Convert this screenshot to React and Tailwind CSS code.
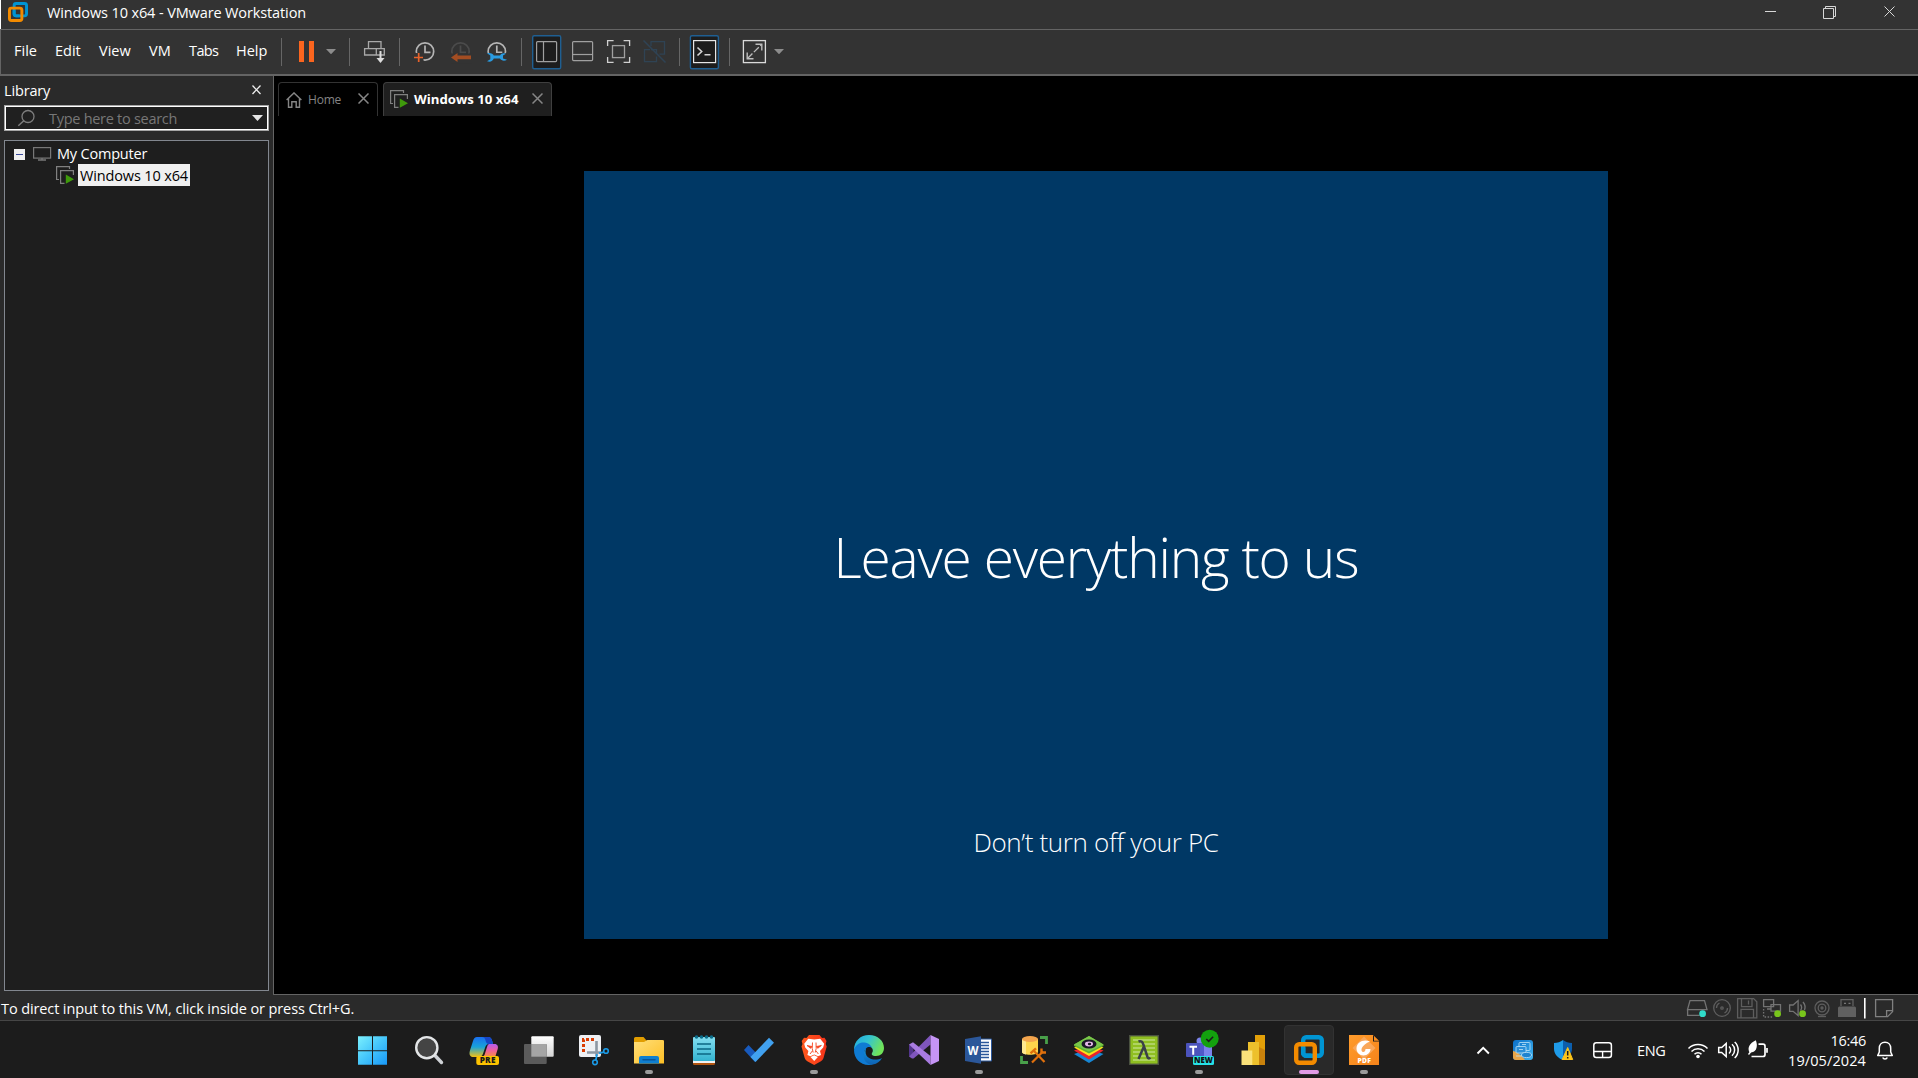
import React from "react";

/* Drawing area whose user units are window pixels. */
function Px({ x, y, w, h, className = "", children }) {
  return (
    <svg width={w} height={h} viewBox={`${x} ${y} ${w} ${h}`} fill="none" className={`block shrink-0 ${className}`}>
      {children}
    </svg>
  );
}

function VmLogo({ size }) {
  return (
    <svg width={size} height={size} viewBox="0 0 30 30" fill="none" className="block shrink-0">
      <rect x="9.2" y="2.2" width="18.6" height="18.6" rx="3" stroke="#0095d3" strokeWidth="4.4" />
      <rect x="2.2" y="9.2" width="18.6" height="18.6" rx="3" stroke="#f38b00" strokeWidth="4.4" />
      <path d="M9.2 12.5V18a3 3 0 0 0 3 2.8h5" stroke="#0095d3" strokeWidth="4.4" />
    </svg>
  );
}

function TitleBar() {
  return (
    <header className="flex h-[30px] shrink-0 border-b border-[#646464] bg-[#333333]">
      <div className="w-px bg-white" />
      <div className="pt-[2px] pl-[7px]"><VmLogo size={20} /></div>
      <h1 className="pt-[3px] pl-[19px] text-[14.5px] leading-5 tracking-[-0.12px] text-white">
        Windows 10 x64 - VMware Workstation
      </h1>
      <Px x={1758} y={0} w={160} h={29} className="ml-auto">
        <g stroke="#d8d8d8">
          <path d="M1765 11.5h11" />
          <path d="M1823.5 8.5h10v10h-10zM1825.5 8.5v-2h10v10h-2" />
          <path d="M1884.5 6.5l10 10M1894.5 6.5l-10 10" />
        </g>
      </Px>
    </header>
  );
}

function Clock({ cx, stroke }) {
  return (
    <g stroke={stroke}>
      <circle cx={cx} cy="51.5" r="8.7" strokeWidth="1.7" />
      <path d={`M${cx} 45.5v6.8h5.5`} strokeWidth="1.7" />
    </g>
  );
}

function Toolbar() {
  return (
    <nav className="flex h-[46px] shrink-0 border-b-2 border-[#646464] bg-[#333333] text-[14.5px] leading-5 text-white">
      <div className="w-px bg-[#646464]" />
      <div className="flex w-[279px] pt-[11px] pl-[13px]">
        <span className="w-[41px]">File</span>
        <span className="w-[44px]">Edit</span>
        <span className="w-[50px]">View</span>
        <span className="w-[40px]">VM</span>
        <span className="w-[47px] tracking-[-0.6px]">Tabs</span>
        <span>Help</span>
      </div>
      <Px x={280} y={30} w={520} h={44}>
        <g stroke="#666">
          <path d="M281.5 38v28M349.5 38v28M399.5 38v28M521.5 38v28M679.5 38v28M729.5 38v28" />
        </g>
        <path d="M299 41h5v21h-5zM309 41h5v21h-5z" fill="#fb651e" />
        <path d="M326 49h10l-5 5.3zM774 49h10l-5 5.3z" fill="#8c8c8c" />
        <g stroke="#a9a9a9" strokeWidth="1.3">
          <path d="M368.5 41.7h12.5v7h-12.5zM364.6 48.7h11.7v6.3h-11.7zM376.3 48.7h8v6.3h-8z" />
          <path d="M380.5 51v10" stroke="#ddd" strokeWidth="2" />
          <path d="M376.5 58h8l-4 5z" fill="#ddd" stroke="none" />
        </g>
        <Clock cx={425} stroke="#b5b5b5" />
        <path d="M413 53h6.5v3h4v7h-10.500z" fill="#333" />
        <path d="M418.700 53v9M414 57.500h9" stroke="#e8622a" strokeWidth="1.7" />
        <Clock cx={460.5} stroke="#4b4b4b" />
        <path d="M451 53.5h21v10h-21z" fill="#333" />
        <path d="M451 57.500l6.500-4.500v2.600H471v3.600h-13.500v2.800z" fill="#a34d22" />
        <Clock cx={496.8} stroke="#b5b5b5" />
        <path d="M486 53h22v10h-22z" fill="#333" />
        <path d="M487 53.200c3.300-.8 6 .3 6.800 2.400H500c1-2.300 3.600-2.900 6-1.900l-3 1.800v3l4 1.300c-2.500 1.500-5.800 1-7-1.200h-6.200c-1 2.600-3.500 3.800-6.800 2.700l3.300-2.100v-3.700z" fill="#2a9be0" />
        <rect x="532.7" y="35.7" width="28" height="33" rx="1.5" fill="#1d1d1d" stroke="#1f5f92" strokeWidth="1.4" />
        <g stroke="#a0a0a0" strokeWidth="1.2">
          <rect x="536.6" y="41.6" width="20" height="20" rx="1" />
          <path d="M543.5 41.6v20" />
          <rect x="572.6" y="41.6" width="20" height="19" rx="1" />
          <path d="M572.6 54.5h20" />
        </g>
        <g stroke="#d0d0d0" strokeWidth="1.3">
          <path d="M607.6 46v-5.4h6M623.6 40.6h6v5.4M629.6 57v5.4h-6M613.6 62.4h-6v-5.4" />
          <rect x="612.5" y="45.6" width="12" height="12" stroke="#a0a0a0" />
        </g>
        <g stroke="#2f4354" strokeWidth="1.3">
          <path d="M651 46v-4.400h13.500v12.500h-5M650 49.600h-5.500v12h12v-5M651 49.600h5.500v4.500" />
          <path d="M643.500 40.500l22 22" strokeWidth="1.6" />
        </g>
        <rect x="690.4" y="35.7" width="28" height="33" rx="1.5" fill="#1d1d1d" stroke="#1f5f92" strokeWidth="1.4" />
        <rect x="693.6" y="40.6" width="22" height="22" stroke="#e6e6e6" strokeWidth="1.2" />
        <path d="M697.5 47.5l4.2 4-4.2 4M704.500 54.800h6" stroke="#d5d5d5" strokeWidth="1.6" />
        <rect x="743.4" y="40.6" width="22" height="22" stroke="#dadada" strokeWidth="1.3" />
        <path d="M747.5 58.500L761.500 44.500" stroke="#bdbdbd" strokeWidth="1.3" strokeDasharray="7 2" />
        <path d="M755.5 44.200h6.300v6.300M747.200 52.500v6.300h6.300" stroke="#bdbdbd" strokeWidth="1.4" />
      </Px>
    </nav>
  );
}

function VmRunning() {
  return (
    <svg width="18" height="18" viewBox="0 0 18 18" fill="none" className="block shrink-0">
      <path d="M3 13.5H.6V.6H13.500V3" stroke="#808080" strokeWidth="1.2" />
      <path d="M8.5 17.4H4.600V4.600H17.400V9" stroke="#808080" strokeWidth="1.2" />
      <path d="M9.8 8.6L18 13.2 9.800 17.800z" fill="#3f9a0c" />
    </svg>
  );
}

function Library() {
  return (
    <aside className="flex w-[273px] shrink-0 flex-col bg-[#2a2a2a] pr-[4px] pb-[4px] pl-[4px] text-[14.5px] leading-5 text-white">
      <div className="flex h-[29px] pt-[5px]">
        <span className="tracking-[-0.15px]">Library</span>
        <Px x={249} y={81} w={20} h={20} className="ml-auto">
          <path d="M252.5 85.500l8 8.500M260.500 85.500l-8 8.500" stroke="#ededed" strokeWidth="1.3" />
        </Px>
      </div>
      <div className="flex h-[26px] shrink-0 border border-[#a5a5a5] bg-[#202020] text-[#777]">
        <div className="flex grow border border-white">
          <Px x={6} y={107} w={42} h={22}>
            <circle cx="28" cy="116.5" r="6" stroke="#7d7d7d" strokeWidth="1.3" />
            <path d="M23.8 120.800l-5.500 5" stroke="#7d7d7d" strokeWidth="1.5" />
          </Px>
          <span className="pt-[2px] pl-[1px] tracking-[-0.28px]">Type here to search</span>
          <Px x={247} y={107} w={20} h={22} className="ml-auto">
            <path d="M252 115h11l-5.500 6z" fill="#e5e5e5" />
          </Px>
        </div>
      </div>
      <div className="mt-[9px] grow border border-[#82878f] bg-[#1e1e1e] pt-[2px]">
        <div className="flex h-[21px]">
          <Px x={5} y={143} w={52} h={20}>
            <rect x="14" y="149" width="11" height="11" fill="#f0f0f0" />
            <path d="M16 154.500h7" stroke="#3a4a9c" />
            <rect x="33.6" y="147.600" width="17" height="10.500" stroke="#787878" strokeWidth="1.2" />
            <path d="M38 160h8M42 158v2" stroke="#787878" strokeWidth="1.3" />
          </Px>
          <span className="pt-px tracking-[-0.2px]">My Computer</span>
        </div>
        <div className="flex h-[22px] pl-[51px]">
          <div className="pt-[2px]"><VmRunning /></div>
          <span className="ml-[4px] h-[22px] w-[112px] bg-[#f0f0f0] pt-[2px] pl-[2px] tracking-[-0.14px] whitespace-nowrap text-black">
            Windows 10 x64
          </span>
        </div>
      </div>
    </aside>
  );
}

function TabClose() {
  return (
    <svg width="11" height="11" viewBox="0 0 11 11" className="mt-[10px] block shrink-0">
      <path d="M.5 .5l10 10M10.500 .5l-10 10" stroke="#868686" strokeWidth="1.5" />
    </svg>
  );
}

function Console() {
  return (
    <main className="flex grow flex-col border-b border-l border-[#646464] bg-black">
      <div className="flex gap-[5px] pt-[6px] pl-[4px]">
        <div className="flex h-[34px] w-[100px] rounded-t-[4px] border border-b-0 border-[#333]">
          <svg width="16" height="16" viewBox="0 0 16 16" fill="none" className="mt-[9px] ml-[7px] block">
            <path d="M.6 8L8 .9 15.400 8M2.500 6.500v8.700h3.300V9.800h4.400v5.400h3.300V6.500" stroke="#858585" strokeWidth="1.4" />
          </svg>
          <span className="w-[49px] pt-[7px] pl-[6px] text-[12px] leading-[20px] tracking-[-0.2px] text-[#858585]">Home</span>
          <div className="ml-[7px]"><TabClose /></div>
        </div>
        <div className="flex h-[34px] w-[169px] rounded-t-[4px] border border-b-0 border-[#3f3f3f] bg-[#1f1f1f]">
          <div className="pt-[7px] pl-[6px]"><VmRunning /></div>
          <span className="w-[124px] pt-[6px] pl-[6px] text-[13.2px] leading-[20px] font-bold whitespace-nowrap text-white">
            Windows 10 x64
          </span>
          <TabClose />
        </div>
      </div>
      <section className="mt-[55px] ml-[310px] flex h-[768px] w-[1024px] flex-col items-center bg-[#003865] text-white">
        <p className="mt-[346px] text-[55px] leading-[80px] font-light tracking-[-1.2px]">Leave everything to us</p>
        <p className="mt-[225px] text-[26px] leading-[40px] font-light tracking-[-0.35px]">Don’t turn off your PC</p>
      </section>
    </main>
  );
}

function StatusBar() {
  return (
    <div className="flex h-[26px] shrink-0 border-b border-[#464646] bg-[#2a2a2a]">
      <p className="pt-[4px] pl-[1px] text-[14.5px] leading-5 tracking-[-0.11px] text-white">
        To direct input to this VM, click inside or press Ctrl+G.
      </p>
      <Px x={1680} y={995} w={238} h={25} className="ml-auto">
        <g stroke="#737373" strokeWidth="1.3">
          <path d="M1690 1000.600h14.500l2.500 9h-19.500zM1687.600 1009.600v5.700h12" />
          <g stroke="#5e5e5e">
            <circle cx="1722" cy="1008" r="8.3" />
            <circle cx="1722" cy="1008" r="1.2" />
            <path d="M1716.500 1008a5.500 5.500 0 0 1 3-5M1727.500 1008a5.500 5.500 0 0 1-3 5" />
            <path d="M1737.600 998.600h16l3.200 3.200v16h-19.200zM1741.500 998.600v8h10.500v-8M1748.500 1000.500v4M1741 1017.800v-8.500h12.500v8.500" />
          </g>
          <path d="M1763.600 999.600h10v7h-10zM1771 1004.600h9.500v6.500h-9.500zM1767 1009h3.500" fill="#2a2a2a" />
          <path d="M1763.600 1009v8h10" strokeDasharray="1.5 1.5" />
          <path d="M1789.600 1005h3.500l5-4.400v15l-5-4.300h-3.500zM1800.500 1004.500a5 5 0 0 1 0 6M1803 1002a8 8 0 0 1 1.500 8" />
          <g stroke="#5e5e5e">
            <circle cx="1822" cy="1008" r="7" />
            <circle cx="1822" cy="1008" r="3.8" />
            <circle cx="1822" cy="1008" r="1" />
            <path d="M1818 1016.500h8" />
          </g>
          <path d="M1841 1006v-6.400h12v6.400" stroke="#606060" />
          <path d="M1844 1003.300h2M1848.500 1003.300h2" stroke="#777" />
          <path d="M1838 1008a1.500 1.500 0 0 1 1.500-1.500h15a1.500 1.500 0 0 1 1.500 1.500v9h-18z" fill="#606060" stroke="none" />
          <path d="M1875.600 999.600h17v12l-5 5h-12zM1892.600 1010.600h-6v6" stroke="#808080" />
        </g>
        <path d="M1864.800 998v20.500" stroke="#fff" strokeWidth="1.6" />
        <circle cx="1702.6" cy="1013.7" r="3.4" fill="#30dbc9" />
        <circle cx="1777.6" cy="1013.7" r="3.4" fill="#79c51c" />
        <circle cx="1802.6" cy="1013.7" r="3.4" fill="#79c51c" />
      </Px>
    </div>
  );
}

function Grad({ id, a, b, c, x2 = 1, y2 = 1 }) {
  return (
    <linearGradient id={id} x1="0" y1="0" x2={x2} y2={y2}>
      <stop offset="0" stopColor={a} />
      {c && <stop offset=".5" stopColor={c} />}
      <stop offset="1" stopColor={b} />
    </linearGradient>
  );
}

function Defs() {
  return (
    <defs>
      <linearGradient id="win" gradientUnits="userSpaceOnUse" x1="0" y1="1" x2="29" y2="30">
        <stop offset="0" stopColor="#7df1fd" /><stop offset=".5" stopColor="#45c6fb" /><stop offset="1" stopColor="#1898f8" />
      </linearGradient>
      <Grad id="copA" a="#1a6ff0" c="#19a3d8" b="#f2c215" x2={0} />
      <Grad id="copB" a="#b45cf0" c="#f0609a" b="#f7913d" x2={0} />
      <Grad id="tv" a="#ffffff" b="#d5d5d5" x2={0} />
      <Grad id="fold" a="#ffdf7a" b="#fdbf25" />
      <Grad id="note" a="#83def0" b="#33b3d0" x2={0} />
      <Grad id="brv" a="#ff5a1e" b="#f5331a" y2={0} />
      <Grad id="edgeA" a="#1fa9e3" c="#35c4cf" b="#6fe35a" y2={0.4} />
      <Grad id="edgeB" a="#1192dd" b="#0e62b3" x2={0} />
      <Grad id="foxit" a="#ff9c2c" b="#f5831a" />
      <Grad id="tray" a="#0b6fc8" b="#41b4ef" />
    </defs>
  );
}

const ICONS = [
  {
    art: <g transform="translate(-1.5 0)" fill="url(#win)"><path d="M.5 1.300h14v14h-14zM15.500 1.300h14v14h-14zM.5 16.300h14v13.500h-14zM15.500 16.300h14v13.500h-14z" /></g>,
  },
  {
    art: <g><path d="M21 20.500l6.500 7" stroke="#cfd2d6" strokeWidth="3.4" strokeLinecap="round" /><circle cx="12.8" cy="12.7" r="10.6" fill="#444" stroke="#e3e5e7" strokeWidth="2.4" /></g>,
  },
  {
    art: (
      <g>
        <path d="M8 2h11c2.600 0 3.600 1.500 4.200 4l.8 3h-4c-2 0-3 1-3.700 3l-2.400 7c-.8 2-2 3-4.500 3H4.500C1.500 22-.2 20 .8 16L4 6c.8-2.600 2-4 4-4z" fill="url(#copA)" />
        <path d="M13 2h6c2.600 0 3.600 1.500 4.200 4l.8 3h-4c-2.600 0-3-2-3.600-4C15.900 3 15 2 13 2z" fill="#1746c6" />
        <path d="M20 9h5.500c3 0 4 2.500 3.200 5l-2.500 8H13c1.800-.5 2.500-1.800 3-3.500l2-6.500c.5-1.700 1-2.500 2-3z" fill="url(#copB)" />
        <rect x="7.3" y="21" width="22.7" height="9" rx="2" fill="#fdc300" />
        <text x="18.7" y="28.4" textAnchor="middle" fontSize="8.2" fontWeight="800" fill="#1a1a1a" letterSpacing=".3">PRE</text>
      </g>
    ),
  },
  {
    art: <g><rect x="7.3" y="1.3" width="22.4" height="20.4" rx="1" fill="url(#tv)" /><rect x="0" y="9" width="22.7" height="20" rx="1" fill="#5b5b5b" /><path d="M7.3 9h15.400v12.700H7.300z" fill="#a5a5a5" /></g>,
  },
  {
    art: (
      <g>
        <rect width="22" height="22" rx="2" fill="#eef0f4" />
        <path d="M4.5 17V4.500H17" stroke="#da3b01" strokeWidth="3" strokeDasharray="3 2" />
        <path d="M17.5 6v15M8 17.500h14" stroke="#8c97a3" strokeWidth="2.6" />
        <circle cx="27" cy="16" r="2.3" stroke="#1a9be8" strokeWidth="1.6" />
        <circle cx="16" cy="27.3" r="2.3" stroke="#1a9be8" strokeWidth="1.6" />
        <path d="M25 17.200l-5 1M16.800 25.200l1.200-6" stroke="#1a9be8" strokeWidth="1.8" />
      </g>
    ),
  },
  {
    dot: true,
    art: (
      <g>
        <path d="M0 3.500A1.500 1.500 0 0 1 1.500 2h8l3 3.500H30V12H0z" fill="#e19d00" />
        <path d="M0 7h10l3.500-2H28.500A1.500 1.500 0 0 1 30 6.500V28.500H0z" fill="url(#fold)" />
        <path d="M5 28.500V23a2 2 0 0 1 2-2h16a2 2 0 0 1 2 2v5.500z" fill="#0f7fd0" />
        <path d="M9 24.700h12" stroke="#09559a" strokeWidth="1.5" strokeLinecap="round" />
      </g>
    ),
  },
  {
    art: (
      <g>
        <path d="M4 25h22v3.500a1.500 1.500 0 0 1-1.500 1.500h-19A1.500 1.500 0 0 1 4 28.500z" fill="#b1540f" />
        <path d="M4 22h22v6H4z" fill="#f1f1f1" />
        <rect x="4" y="2" width="22" height="24" rx="1" fill="url(#note)" />
        <path d="M8 9h14M8 14h14M8 19h14" stroke="#0b6784" strokeWidth="1.7" />
        <g fill="#0c6d8a"><circle cx="7.5" cy="2" r="1.8" /><circle cx="12.5" cy="2" r="1.8" /><circle cx="17.5" cy="2" r="1.8" /><circle cx="22.5" cy="2" r="1.8" /></g>
      </g>
    ),
  },
  {
    art: <g><path d="M0 15l4.500-5 11 11.500-4.500 5.500z" fill="#185abd" /><path d="M25 2.700l5 5L11.500 27 6.500 22z" fill="#41a1ef" /></g>,
  },
  {
    dot: true,
    art: (
      <g>
        <path d="M7.500 3L10 0h10.500L23 3l2.500-.3L27.500 6l-.8 3 1 2.500L24.500 23c-.5 1.700-1.500 2.500-3 3.500L15.200 30l-6.500-3.500c-1.500-1-2.500-1.800-3-3.500L2.500 11.500l1-2.500-.8-3L5 2.700z" fill="url(#brv)" />
        <path d="M15.200 4.500l6-.7 4 5-1 3.700L21 16l1 4-3 1.300-3.800-1.800-3.800 1.800L8.400 20l1-4-3.200-3.500-1-3.700 4-5z" fill="#fff" />
        <path d="M11.500 22l3.700-1.800 3.700 1.800-3.700 4z" fill="#fff" />
        <path d="M8 10.500l5 1-1.300 1.800zM22.400 10.500l-5 1 1.300 1.800z" fill="#f5411a" stroke="#f5411a" strokeWidth=".8" />
        <path d="M13.500 7.500l-.3 6 1 4M17 7.500l.2 6-1 4M11 19l2.300-3M19.400 19l-2.300-3" stroke="#f5411a" strokeWidth=".9" />
      </g>
    ),
  },
  {
    art: (
      <g>
        <path d="M0 15C0 6 6.500 0 15 0c9 0 15 6 15 13 0 5-3.500 8-8 8-4 0-5-1.500-4-3 1.300-2 1-4-.5-5.500C12 7.500 3 9 0 15z" fill="url(#edgeA)" />
        <path d="M0 15C1.500 9.500 6 7 10.500 7.500c4 .5 7 3 7.500 6-1.500-1.800-4-2-6 0-4 4-2.500 13 7 16C7.500 32 0 24 0 15z" fill="#0f7bd3" />
        <path d="M12 13.500C8.500 16 7.500 30 19 29.500c4-.8 7-3 9-6.500-6.500 3.500-19 1.500-16-9.500z" fill="url(#edgeB)" />
        <path d="M17.800 18c-1 1.500.5 3.500 4 3.700 2.500.1 4.500-.8 6.200.3-5 4.500-15.500 1.500-15.500-5.500 0-2 1.500-3.800 3.300-3.900 2.500.6 3.300 3.600 2 5.400z" fill="#1c1c1c" opacity=".55" />
      </g>
    ),
  },
  {
    art: (
      <g>
        <path d="M0 9.500L4.500 13v5L0 21.500z" fill="#52358c" />
        <path d="M0 21.500L21.500 0v9.500L4.500 23.600 3 23.500z" fill="#7f56bd" />
        <path d="M0 9.500L4 7.300 21.500 21v9z" fill="#a87be0" />
        <path d="M21.500 0L30 4v22l-8.500 4z" fill="#c594f5" />
      </g>
    ),
  },
  {
    dot: true,
    art: (
      <g>
        <path d="M14 4h13.500v22H14z" fill="#fff" stroke="#2b579a" strokeWidth="1" />
        <path d="M17 7.500h8M17 10.500h8M17 13.500h8M17 16.500h8M17 19.500h8M17 22.500h8" stroke="#2b579a" strokeWidth="1.3" />
        <path d="M1 4l16-2.700v27.400L1 26z" fill="#2b579a" />
        <text x="9" y="19.8" textAnchor="middle" fontSize="13" fontWeight="700" fill="#fff" textLength="11" lengthAdjust="spacingAndGlyphs">W</text>
      </g>
    ),
  },
  {
    art: (
      <g>
        <path d="M3 4v13c0 1.500 3.500 2.700 8 2.700s8-1.200 8-2.700V4z" fill="#fdd64c" />
        <path d="M3 4v13c0 1 1.500 2 4 2.500V5z" fill="#ffe98f" />
        <ellipse cx="11" cy="4" rx="8" ry="3" fill="#f3a54d" />
        <path d="M21 2.500h6.500V9M2.500 21v6.500H9" stroke="#49a04a" strokeWidth="2.8" />
        <path d="M14.500 15.500l11 11.500M24 16.500L13 27.500" stroke="#e0700c" strokeWidth="2.2" />
        <path d="M11.500 18.300l5.500-5M22.500 13.500v4h4.500" stroke="#e0700c" strokeWidth="2.4" />
      </g>
    ),
  },
  {
    art: (
      <g>
        <path d="M0 19l15-5 14.500 5L15 28z" fill="#1787d4" />
        <path d="M0 15.500l15-5 14.500 5L15 24.500z" fill="#e9242c" />
        <path d="M0 12.500l15-5 14.500 5L15 21z" fill="#fbe21b" />
        <path d="M0 9.500L15 1l14.500 8.500v1.500L15 18.500 0 11z" fill="#63b32e" />
        <path d="M0 9.500L15 1l14.500 8.500L15 16.500z" fill="#79c74a" />
        <ellipse cx="15" cy="9" rx="7.5" ry="4.6" fill="#1b1726" />
        <ellipse cx="15" cy="9" rx="4" ry="2.4" fill="#e6b7ea" />
        <ellipse cx="15.500" cy="9" rx="1.7" ry="1.2" fill="#1b1726" />
      </g>
    ),
  },
  {
    art: (
      <g>
        <rect x=".7" y=".7" width="28.6" height="28.6" fill="#8fbf21" stroke="#4a5140" strokeWidth="1.4" />
        <path d="M4 5h22M4 9h22M4 13h22M4 17h22M4 21h22M4 25h22" stroke="#bada78" strokeWidth="1.3" />
        <path d="M9.500 6.500c2.500-1 4 0 5 3.500l4 12c.5 1.500 1.500 1.800 3 .8M14.700 12L9.500 24" stroke="#3b4048" strokeWidth="2.5" />
      </g>
    ),
  },
  {
    dot: true,
    art: (
      <g>
        <circle cx="16" cy="6" r="3.5" fill="#7b83eb" />
        <path d="M15 10h13v11H15z" fill="#7b83eb" />
        <path d="M12 8h8v13h-8z" fill="#5059c9" />
        <rect x="2" y="8" width="14" height="14" rx="1" fill="#4b53bc" />
        <path d="M5.500 11.700h7.500M9.200 11.700v8" stroke="#fff" strokeWidth="2" />
        <rect x="9" y="21" width="21" height="9" rx="1.5" fill="#26e0e6" />
        <text x="19.5" y="28.400" textAnchor="middle" fontSize="7.8" fontWeight="800" fill="#101010">NEW</text>
        <circle cx="25.7" cy="3.7" r="9" fill="#13a10e" />
        <path d="M22.300 4l2.400 2.400 4.400-4.600" stroke="#1c1c1c" strokeWidth="1.6" />
      </g>
    ),
  },
  {
    art: (
      <g>
        <path d="M16 0h10v30H16z" fill="#e3a008" /><path d="M20 12l6 3v15h-6z" fill="#c9820c" />
        <path d="M9 7h11v23H9z" fill="#edc02c" />
        <path d="M2.500 15.500h10.800v14.500H2.500z" fill="#fbe27a" />
      </g>
    ),
  },
  { active: true, art: null },
  {
    dot: true,
    art: (
      <g>
        <path d="M0 0h24l6 6.500V30H0z" fill="url(#foxit)" />
        <path d="M24 0l6 6.500h-6z" fill="#1c1c1c" /><path d="M25 1v4.700h5z" fill="#f78c20" />
        <path d="M15 1.500L26.500 13 15 24.500 3.500 13z" fill="#f9a75a" />
        <path d="M21 6.500c-6-3-13.500.3-13.500 7 0 4 3 7 7 7s7-3 7-6.500h-5c0 2-1 3-2.200 3-1.800 0-2.200-2-1.500-4C14 10.500 17 8 21 6.500z" fill="#fff" />
        <text x="15.300" y="27.600" textAnchor="middle" fontSize="6.800" fontWeight="800" fill="#fff" letterSpacing=".2">PDF</text>
      </g>
    ),
  },
];

function Taskbar() {
  return (
    <footer className="flex h-[57px] shrink-0 bg-[#1c1c1c]">
      <svg width="0" height="0" className="block"><Defs /></svg>
      <div className="flex pl-[346px]">
        {ICONS.map(({ art, dot, active }, i) => (
          <div key={i} className="flex w-[55.060px] justify-center pt-[4px]">
            <div className={active ? "flex h-[50px] w-[50px] flex-col items-center rounded-[4px] border border-[#323232] bg-[#292929] pt-[9px]" : "flex h-[50px] w-[50px] flex-col items-center pt-[10px]"}>
              {active ? <VmLogo size={30} /> : (
                <svg width="30" height="30" viewBox="0 0 30 30" fill="none" className="block shrink-0 overflow-visible">{art}</svg>
              )}
              {active && <div className="mt-[5px] h-[4px] w-[20px] shrink-0 rounded-full bg-[#e19be6]" />}
              {dot && <div className="mt-[5px] h-[4px] w-[8px] shrink-0 rounded-full bg-[#9b9b9b]" />}
            </div>
          </div>
        ))}
      </div>
      <div className="ml-auto flex text-[14.5px] leading-5 text-white">
        <Px x={1470} y={1021} w={167} h={57}>
          <path d="M1477.5 1053.500l5.700-5.700 5.700 5.700" stroke="#fff" strokeWidth="1.9" />
          <rect x="1513" y="1040" width="20" height="20" rx="3" fill="url(#tray)" />
          <path d="M1513 1051c5 1 9 5 12 9h-9a3 3 0 0 1-3-3z" fill="#e8a548" />
          <g stroke="#bfe3f8" strokeWidth=".8">
            <rect x="1519" y="1042.500" width="11" height="8" rx="1" />
            <rect x="1516" y="1046.500" width="10" height="6.500" rx="1" fill="#2b8fd8" />
            <ellipse cx="1526.500" cy="1055" rx="5" ry="2.6" fill="#1f83cf" />
            <path d="M1516 1056h6M1522 1044.500h4M1519 1049.500h4" />
          </g>
          <path d="M1554 1043c3.500 0 6.500-1 9-3v20c-5-2-9-6-9-11z" fill="#1f9be8" />
          <path d="M1572 1043c-3.500 0-6.500-1-9-3v20c5-2 9-6 9-11z" fill="#0c5fae" />
          <path d="M1567.700 1047.500l5 12h-10.500z" fill="#fcc419" stroke="#fcc419" strokeLinejoin="round" />
          <path d="M1567.700 1051v4.500M1567.700 1057v1.500" stroke="#1c1c1c" strokeWidth="1.5" />
          <rect x="1593.800" y="1042.800" width="17.600" height="14.600" rx="2.5" stroke="#fff" strokeWidth="1.5" />
          <path d="M1594 1051.500h17.500M1602.600 1051.500v6" stroke="#fff" strokeWidth="1.4" />
        </Px>
        <span className="w-[33px] pt-[20px] tracking-[-0.3px]">ENG</span>
        <Px x={1670} y={1021} w={104} h={57}>
          <g stroke="#fff" strokeWidth="1.5">
            <path d="M1688.500 1048.500a13.500 13.500 0 0 1 19 0M1691.500 1051.500a9.300 9.300 0 0 1 13 0M1694.500 1054.300a5 5 0 0 1 7 0" />
            <path d="M1718.700 1047.500h3l4.500-4v13l-4.500-4h-3z" />
            <path d="M1729 1046.500a4.500 4.500 0 0 1 0 7M1732 1044.300a7.500 7.500 0 0 1 0 11.400M1734.700 1042a11 11 0 0 1 0 16" />
          </g>
          <circle cx="1698" cy="1056.500" r="1.8" fill="#fff" />
          <path d="M1758.500 1044.200h4.500a2 2 0 0 1 2 2v8.300a2 2 0 0 1-2 2h-11.500M1767 1048v4.700" stroke="#fff" strokeWidth="1.7" />
          <path d="M1749.500 1052.500c-2.500-4.500 0-9.500 6.300-12.300 2.200 5.300 1 11-3.800 12z" fill="#fff" />
          <path d="M1748.500 1054.500l3.700-4.500" stroke="#fff" strokeWidth="1.3" />
        </Px>
        <div className="w-[92px] pt-[10px] text-right">
          <p className="tracking-[-0.3px]">16:46</p>
          <p className="tracking-[0.1px]">19/05/2024</p>
        </div>
        <Px x={1866} y={1021} w={52} h={57}>
          <path d="M1885 1042.200c-3.600 0-5.700 2.600-5.700 6v3.800l-1.600 3.600h14.600l-1.600-3.600v-3.800c0-3.400-2.100-6-5.700-6z" stroke="#fff" strokeWidth="1.5" strokeLinejoin="round" />
          <path d="M1882.700 1057.500a2.500 2.500 0 0 0 4.600 0" stroke="#fff" strokeWidth="1.5" />
        </Px>
      </div>
    </footer>
  );
}

export default function App() {
  return (
    <div className="flex h-[1078px] w-[1918px] flex-col overflow-hidden bg-[#2a2a2a] font-['Open_Sans','Noto_Sans',sans-serif]">
      <TitleBar />
      <Toolbar />
      <div className="flex h-[919px] shrink-0">
        <Library />
        <Console />
      </div>
      <StatusBar />
      <Taskbar />
    </div>
  );
}
